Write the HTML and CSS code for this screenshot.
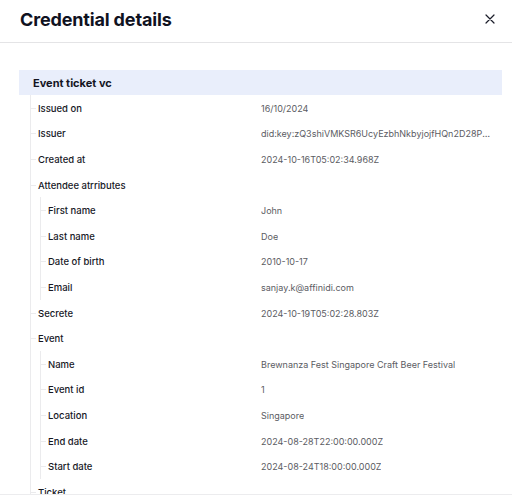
FILE: index.html
```html
<!DOCTYPE html>
<html>
<head>
<meta charset="utf-8">
<link rel="stylesheet" href="styles.css">
</head>
<body>
<div class="modal">
  <header class="modal-header">
    <h1 class="title">Credential details</h1>
    <button class="close" aria-label="Close">
      <svg width="10" height="10" viewBox="0 0 10 10"><path d="M1 1L9 9M9 1L1 9" stroke="#1b1d2a" stroke-width="1.2" stroke-linecap="round"/></svg>
    </button>
  </header>
  <div class="modal-body">
    <section class="card">
      <div class="card-head">Event ticket vc</div>
      <div class="tree">
        <div class="row"><span class="label">Issued on</span><span class="value">16/10/2024</span></div>
        <div class="row"><span class="label">Issuer</span><span class="value">did:key:zQ3shiVMKSR6UcyEzbhNkbyjojfHQn2D28PfmXcr7nR3aSXSUU</span></div>
        <div class="row"><span class="label">Created at</span><span class="value">2024-10-16T05:02:34.968Z</span></div>
        <div class="row"><span class="label">Attendee atrributes</span><span class="value"></span></div>
        <div class="tree sub">
          <div class="row"><span class="label">First name</span><span class="value">John</span></div>
          <div class="row"><span class="label">Last name</span><span class="value">Doe</span></div>
          <div class="row"><span class="label">Date of birth</span><span class="value">2010-10-17</span></div>
          <div class="row"><span class="label">Email</span><span class="value">sanjay.k@affinidi.com</span></div>
        </div>
        <div class="row"><span class="label">Secrete</span><span class="value">2024-10-19T05:02:28.803Z</span></div>
        <div class="row"><span class="label">Event</span><span class="value"></span></div>
        <div class="tree sub">
          <div class="row"><span class="label">Name</span><span class="value">Brewnanza Fest Singapore Craft Beer Festival</span></div>
          <div class="row"><span class="label">Event id</span><span class="value">1</span></div>
          <div class="row"><span class="label">Location</span><span class="value">Singapore</span></div>
          <div class="row"><span class="label">End date</span><span class="value">2024-08-28T22:00:00.000Z</span></div>
          <div class="row"><span class="label">Start date</span><span class="value">2024-08-24T18:00:00.000Z</span></div>
        </div>
        <div class="row"><span class="label">Ticket</span><span class="value"></span></div>
      </div>
    </section>
  </div>
</div>
</body>
</html>
```

FILE: styles.css
```css
* { box-sizing: border-box; }
html, body { margin: 0; padding: 0; background: #fff; }
body {
  font-family: Inter, "Open Sans", sans-serif;
  color: #14151f;
  width: 512px;
  height: 498px;
  overflow: hidden;
}
.modal { display: flex; flex-direction: column; height: 495px; }
.modal-header {
  height: 43px;
  flex: none;
  display: flex;
  align-items: center;
  justify-content: space-between;
  padding: 0 16px 0 20px;
  border-bottom: 1px solid #e4e4e6;
}
.title {
  margin: 0;
  font-size: 18px;
  font-weight: 700;
  color: #10121f;
  letter-spacing: -0.15px;
  padding-bottom: 4px;
}
.close {
  border: 0;
  background: none;
  padding: 0;
  width: 12px;
  height: 12px;
  display: flex;
  align-items: center;
  justify-content: center;
  margin-bottom: 5px;
}
.modal-body {
  flex: 1;
  overflow: hidden;
  padding: 27px 10px 0 19px;
  border-bottom: 1px solid #ececee;
}
.card-head {
  height: 25px;
  background: #e9eefb;
  display: flex;
  align-items: center;
  padding-left: 14px;
  font-size: 11px;
  font-weight: 700;
  color: #14151f;
}
.tree {
  margin-left: 11px;
  border-left: 1px solid #ebebed;
  --label-w: 230px;
}
.tree.sub {
  margin-left: 9px;
  --label-w: 220px;
}
.row {
  position: relative;
  height: 25.6px;
  display: flex;
  align-items: center;
  padding-left: 7px;
  padding-top: 1px;
}
.row::before {
  content: "";
  position: absolute;
  left: 0;
  top: 50%;
  width: 5px;
  border-top: 1px solid #ebebed;
}
.label {
  width: calc(var(--label-w) - 7px);
  flex: none;
  font-size: 9.5px;
  font-weight: 500;
  color: #17181f;
}
.value {
  max-width: 230px;
  font-size: 9px;
  color: #5b5c63;
  white-space: nowrap;
  overflow: hidden;
  text-overflow: ellipsis;
}
```
